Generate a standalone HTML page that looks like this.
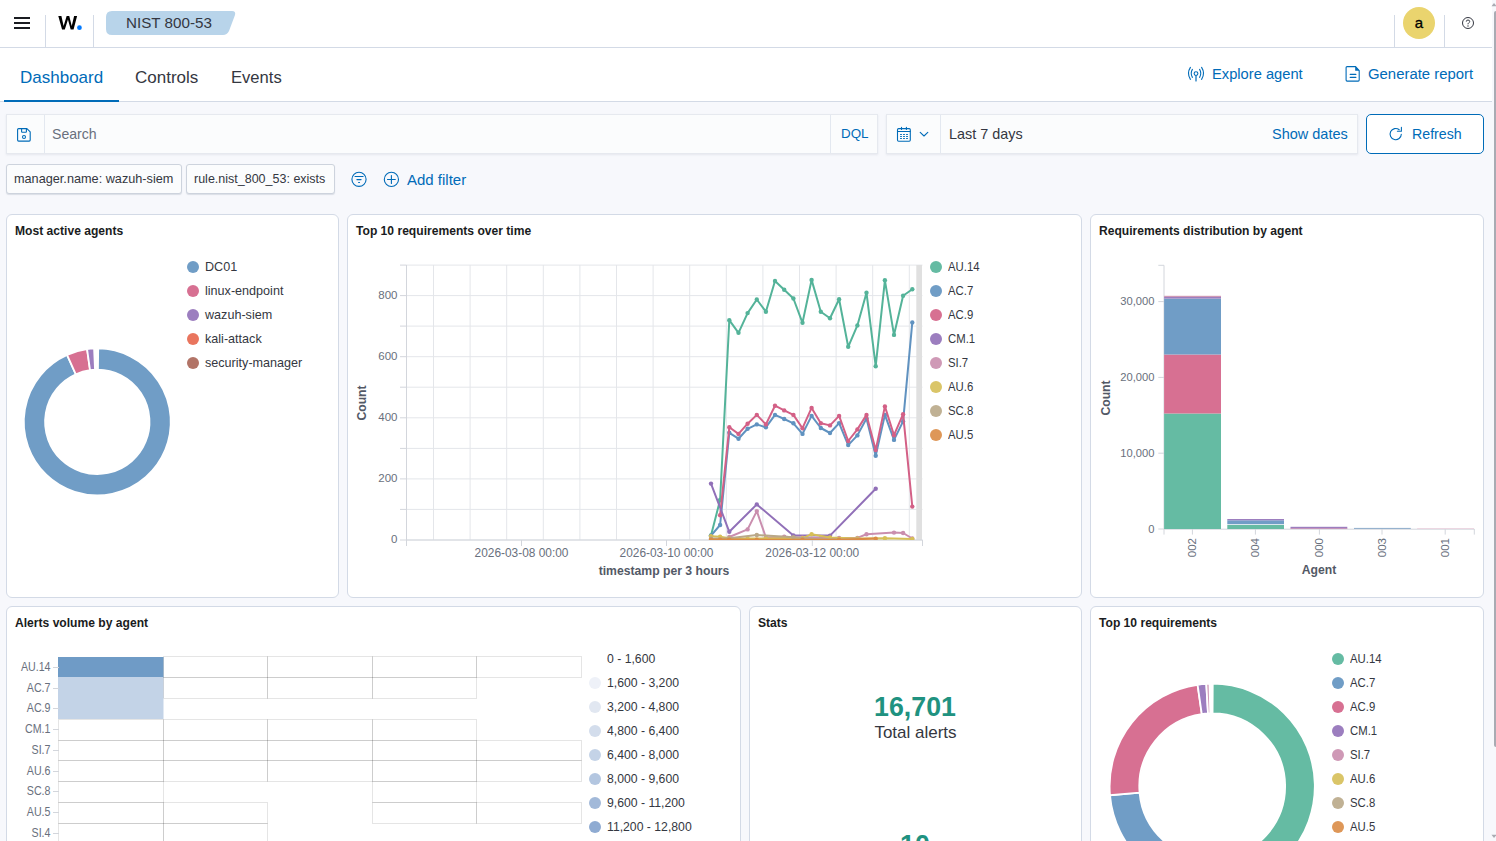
<!DOCTYPE html>
<html><head><meta charset="utf-8">
<style>
*{box-sizing:border-box;margin:0;padding:0}
html,body{width:1496px;height:841px;overflow:hidden;background:#f7f8fc;font-family:"Liberation Sans",sans-serif;color:#343741}
.a{position:absolute;white-space:nowrap}
.hdr{left:0;top:0;width:1492px;height:48px;background:#fff;border-bottom:1px solid #d3dae6}
.tabs{left:0;top:48px;width:1492px;height:54px;background:#fff;border-bottom:1px solid #d3dae6}
.vd{width:1px;background:#d3dae6}
.blue{color:#006bb8}
.box{background:#fbfcfd;border:1px solid #e6e9ef;box-shadow:0 1px 2px rgba(152,162,179,.18)}
.pill{background:#fbfcfd;border:1px solid #cdd3dd;border-radius:3px;box-shadow:0 1px 1px rgba(152,162,179,.3);height:29.5px}
.panel{background:#fff;border:1px solid #d3dae6;border-radius:6px}
.ptitle{font-weight:bold;font-size:12.1px;color:#1a1c21;line-height:14px}
.lg{font-size:12.6px;color:#343741}
.dot{width:11px;height:11px;border-radius:50%}
</style></head><body>
<!-- header -->
<div class="a hdr"></div>
<div class="a" style="left:14px;top:17px;width:16px;height:2px;background:#1a1c21"></div>
<div class="a" style="left:14px;top:22px;width:16px;height:2px;background:#1a1c21"></div>
<div class="a" style="left:14px;top:27px;width:16px;height:2px;background:#1a1c21"></div>
<div class="a vd" style="left:45px;top:15px;height:33px"></div>
<div class="a vd" style="left:93px;top:15px;height:33px"></div>
<svg class="a" style="left:0;top:0" width="100" height="40"><path d="M58.3 16.05H61.4L63.63 26.1L66.64 16.05H69.26L71.74 26.1L74.1 16.05H77.1L73.57 29.53H70.69L67.95 19.6L64.81 29.53H62.06Z" fill="#000"/><circle cx="79.46" cy="27.69" r="2.35" fill="#0079ff"/></svg>

<svg class="a" style="left:106px;top:11px" width="130" height="24"><path d="M6 0H126Q130 0 129 4L123 20Q121 24 117 24H6Q0 24 0 18V6Q0 0 6 0Z" fill="#b8d4ea"/></svg>
<div class="a" style="left:126px;top:14px;font-size:15.2px;color:#343741;line-height:18px">NIST 800-53</div>
<div class="a vd" style="left:1394px;top:15px;height:33px"></div>
<div class="a vd" style="left:1444px;top:15px;height:33px"></div>
<div class="a" style="left:1403px;top:7px;width:32px;height:32px;border-radius:50%;background:#ead46e"></div>
<div class="a" style="left:1403px;top:13.5px;width:32px;text-align:center;font-size:15px;color:#000;line-height:18px;-webkit-text-stroke:0.3px #000">a</div>
<svg class="a" style="left:1461.2px;top:16px" width="14" height="14" viewBox="0 0 14 14"><circle cx="7" cy="7" r="5.5" fill="none" stroke="#343741" stroke-width="1"/><path d="M5.3 5.6Q5.3 4 7 4Q8.7 4 8.7 5.5Q8.7 6.5 7.6 7Q7 7.3 7 8.3" fill="none" stroke="#343741" stroke-width="1"/><circle cx="7" cy="10" r="0.7" fill="#343741"/></svg>

<!-- tabs -->
<div class="a tabs"></div>
<div class="a blue" style="left:20px;top:67.5px;font-size:17px;line-height:20px">Dashboard</div>
<div class="a" style="left:4px;top:100px;width:115px;height:2px;background:#006bb8"></div>
<div class="a" style="left:135px;top:67.5px;font-size:17px;line-height:20px">Controls</div>
<div class="a" style="left:231px;top:67.5px;font-size:16.6px;line-height:20px">Events</div>
<div class="a blue" style="left:1212px;top:64.5px;font-size:14.7px;line-height:18px">Explore agent</div>
<div class="a blue" style="left:1368px;top:64.5px;font-size:14.9px;line-height:18px">Generate report</div>

<!-- search -->
<div class="a box" style="left:6px;top:114px;width:872px;height:40px"></div>
<div class="a vd" style="left:44px;top:115px;height:38px;background:#e3e8f0"></div>
<div class="a vd" style="left:830px;top:115px;height:38px;background:#e3e8f0"></div>
<div class="a" style="left:52px;top:125px;font-size:14.1px;color:#69707d;line-height:18px">Search</div>
<div class="a blue" style="left:841px;top:125px;font-size:13.4px;line-height:18px">DQL</div>
<div class="a box" style="left:886px;top:114px;width:472px;height:40px"></div>
<div class="a vd" style="left:940px;top:115px;height:38px;background:#e3e8f0"></div>
<div class="a" style="left:949px;top:125px;font-size:14.4px;line-height:18px">Last 7 days</div>
<div class="a blue" style="left:1272px;top:125px;font-size:14.5px;line-height:18px">Show dates</div>
<div class="a" style="left:1366px;top:114px;width:118px;height:40px;border:1px solid #006bb8;border-radius:5px;background:#fff"></div>
<div class="a blue" style="left:1412px;top:125px;font-size:14.2px;line-height:18px">Refresh</div>

<!-- filters -->
<div class="a pill" style="left:6px;top:164px;width:176px"></div>
<div class="a" style="left:14px;top:171px;font-size:12.7px;color:#343741;line-height:16px">manager.name: wazuh-siem</div>
<div class="a pill" style="left:186px;top:164px;width:149px"></div>
<div class="a" style="left:194px;top:171px;font-size:12.5px;color:#343741;line-height:16px">rule.nist_800_53: exists</div>
<div class="a blue" style="left:407px;top:171px;font-size:15px;line-height:18px">Add filter</div>

<!-- panels -->
<div class="a panel" style="left:6px;top:214px;width:333px;height:384px"></div>
<div class="a panel" style="left:347px;top:214px;width:735px;height:384px"></div>
<div class="a panel" style="left:1090px;top:214px;width:394px;height:384px"></div>
<div class="a panel" style="left:6px;top:606px;width:735px;height:260px"></div>
<div class="a panel" style="left:749px;top:606px;width:333px;height:260px"></div>
<div class="a panel" style="left:1090px;top:606px;width:394px;height:260px"></div>

<div class="a ptitle" style="left:15px;top:224px">Most active agents</div>
<div class="a ptitle" style="left:356px;top:224px">Top 10 requirements over time</div>
<div class="a ptitle" style="left:1099px;top:224px">Requirements distribution by agent</div>
<div class="a ptitle" style="left:15px;top:616px">Alerts volume by agent</div>
<div class="a ptitle" style="left:758px;top:616px">Stats</div>
<div class="a ptitle" style="left:1099px;top:616px">Top 10 requirements</div>

<!-- icons -->
<svg class="a" style="left:0;top:0" width="1496" height="200" viewBox="0 0 1496 200" fill="none" stroke-linecap="round" stroke-linejoin="round">
<g stroke="#006bb8" stroke-width="1.1">
<path d="M18.6 128.6H26.9L30.2 131.9V140.1Q30.2 141.1 29.2 141.1H18.6Q17.6 141.1 17.6 140.1V129.6Q17.6 128.6 18.6 128.6Z"/>
<path d="M21.6 128.8V131.7Q21.6 132.3 22.2 132.3H25.8Q26.4 132.3 26.4 131.7V128.8"/>
<circle cx="24" cy="137" r="1.5"/>
<path d="M898.6 128.6H909.2Q910.3 128.6 910.3 129.7V140.1Q910.3 141.2 909.2 141.2H898.6Q897.5 141.2 897.5 140.1V129.7Q897.5 128.6 898.6 128.6Z"/>
<path d="M897.6 131.5H910.2M901.5 127.3V129.4M906.4 127.3V129.4"/>
<path d="M920.2 132.4L924 136L927.8 132.4"/>
<path d="M1401.3 134.2A5.6 5.6 0 1 1 1399.2 129.7M1401.4 127.4V131.3H1397.4"/>
<circle cx="359" cy="179.3" r="7.1"/>
<path d="M355 176.5H363.1M356.9 179.6H361.1M358.6 182.5H359.5"/>
<circle cx="391.4" cy="179.4" r="7.1"/>
<path d="M387.5 179.5H395.3M391.4 175.6V183.4"/>
<circle cx="1196" cy="73.6" r="1.9"/>
<path d="M1196 75.8V81" stroke-width="1.2"/>
<path d="M1192.4 69.4Q1190 73.4 1192.4 77.4M1199.6 69.4Q1202 73.4 1199.6 77.4M1190.4 67.4Q1186.5 73.4 1190.4 79.4M1201.6 67.4Q1205.5 73.4 1201.6 79.4"/>
<path d="M1347.1 66.6H1355.6L1359.2 70.6V80.1Q1359.2 81.1 1358.2 81.1H1347.1Q1346.1 81.1 1346.1 80.1V67.6Q1346.1 66.6 1347.1 66.6Z"/>
<path d="M1350.2 74.4H1355.9M1350.2 77.4H1355.9"/>
</g>
<path d="M1355.2 66.4V70.8H1359.4Z" fill="#006bb8"/>
<g fill="#006bb8">
<rect x="900" y="133.9" width="2" height="1.1" rx="0.5"/><rect x="903" y="133.9" width="2" height="1.1" rx="0.5"/><rect x="906" y="133.9" width="2" height="1.1" rx="0.5"/>
<rect x="900" y="135.9" width="2" height="1.1" rx="0.5"/><rect x="903" y="135.9" width="2" height="1.1" rx="0.5"/><rect x="906" y="135.9" width="2" height="1.1" rx="0.5"/>
<rect x="900" y="137.9" width="2" height="1.1" rx="0.5"/><rect x="903" y="137.9" width="2" height="1.1" rx="0.5"/><rect x="906" y="137.9" width="2" height="1.1" rx="0.5"/>
</g>
</svg>
<svg class="a" style="left:0;top:0" width="1496" height="841" viewBox="0 0 1496 841"><line x1="433.5" y1="265.0" x2="433.5" y2="540.0" stroke="#e4e6ea" stroke-width="1"/><line x1="470.1" y1="265.0" x2="470.1" y2="540.0" stroke="#e4e6ea" stroke-width="1"/><line x1="506.7" y1="265.0" x2="506.7" y2="540.0" stroke="#e4e6ea" stroke-width="1"/><line x1="543.3" y1="265.0" x2="543.3" y2="540.0" stroke="#e4e6ea" stroke-width="1"/><line x1="579.9" y1="265.0" x2="579.9" y2="540.0" stroke="#e4e6ea" stroke-width="1"/><line x1="616.5" y1="265.0" x2="616.5" y2="540.0" stroke="#e4e6ea" stroke-width="1"/><line x1="653.1" y1="265.0" x2="653.1" y2="540.0" stroke="#e4e6ea" stroke-width="1"/><line x1="689.7" y1="265.0" x2="689.7" y2="540.0" stroke="#e4e6ea" stroke-width="1"/><line x1="726.3" y1="265.0" x2="726.3" y2="540.0" stroke="#e4e6ea" stroke-width="1"/><line x1="762.9" y1="265.0" x2="762.9" y2="540.0" stroke="#e4e6ea" stroke-width="1"/><line x1="799.5" y1="265.0" x2="799.5" y2="540.0" stroke="#e4e6ea" stroke-width="1"/><line x1="836.1" y1="265.0" x2="836.1" y2="540.0" stroke="#e4e6ea" stroke-width="1"/><line x1="872.7" y1="265.0" x2="872.7" y2="540.0" stroke="#e4e6ea" stroke-width="1"/><line x1="909.3" y1="265.0" x2="909.3" y2="540.0" stroke="#e4e6ea" stroke-width="1"/><line x1="406.5" y1="540.0" x2="922.5" y2="540.0" stroke="#e4e6ea" stroke-width="1"/><line x1="406.5" y1="509.4" x2="922.5" y2="509.4" stroke="#e4e6ea" stroke-width="1"/><line x1="406.5" y1="478.9" x2="922.5" y2="478.9" stroke="#e4e6ea" stroke-width="1"/><line x1="406.5" y1="448.4" x2="922.5" y2="448.4" stroke="#e4e6ea" stroke-width="1"/><line x1="406.5" y1="417.8" x2="922.5" y2="417.8" stroke="#e4e6ea" stroke-width="1"/><line x1="406.5" y1="387.2" x2="922.5" y2="387.2" stroke="#e4e6ea" stroke-width="1"/><line x1="406.5" y1="356.7" x2="922.5" y2="356.7" stroke="#e4e6ea" stroke-width="1"/><line x1="406.5" y1="326.1" x2="922.5" y2="326.1" stroke="#e4e6ea" stroke-width="1"/><line x1="406.5" y1="295.6" x2="922.5" y2="295.6" stroke="#e4e6ea" stroke-width="1"/><line x1="406.5" y1="265.1" x2="922.5" y2="265.1" stroke="#e4e6ea" stroke-width="1"/><rect x="916.3" y="265.0" width="5.7" height="275.0" fill="#e0e0e0"/><line x1="406.5" y1="265.0" x2="406.5" y2="540.0" stroke="#d3d6dc" stroke-width="1"/><line x1="406.5" y1="540.0" x2="922.5" y2="540.0" stroke="#d3d6dc" stroke-width="1"/><line x1="400" y1="540.0" x2="406.5" y2="540.0" stroke="#d3d6dc" stroke-width="1"/><line x1="400" y1="509.4" x2="406.5" y2="509.4" stroke="#d3d6dc" stroke-width="1"/><line x1="400" y1="478.9" x2="406.5" y2="478.9" stroke="#d3d6dc" stroke-width="1"/><line x1="400" y1="448.4" x2="406.5" y2="448.4" stroke="#d3d6dc" stroke-width="1"/><line x1="400" y1="417.8" x2="406.5" y2="417.8" stroke="#d3d6dc" stroke-width="1"/><line x1="400" y1="387.2" x2="406.5" y2="387.2" stroke="#d3d6dc" stroke-width="1"/><line x1="400" y1="356.7" x2="406.5" y2="356.7" stroke="#d3d6dc" stroke-width="1"/><line x1="400" y1="326.1" x2="406.5" y2="326.1" stroke="#d3d6dc" stroke-width="1"/><line x1="400" y1="295.6" x2="406.5" y2="295.6" stroke="#d3d6dc" stroke-width="1"/><line x1="400" y1="265.1" x2="406.5" y2="265.1" stroke="#d3d6dc" stroke-width="1"/><line x1="406.5" y1="540.0" x2="406.5" y2="546" stroke="#d3d6dc" stroke-width="1"/><line x1="521.5" y1="540.0" x2="521.5" y2="546" stroke="#d3d6dc" stroke-width="1"/><line x1="666.5" y1="540.0" x2="666.5" y2="546" stroke="#d3d6dc" stroke-width="1"/><line x1="812.3" y1="540.0" x2="812.3" y2="546" stroke="#d3d6dc" stroke-width="1"/><line x1="922.5" y1="540.0" x2="922.5" y2="546" stroke="#d3d6dc" stroke-width="1"/><clipPath id="cp2"><rect x="400" y="255" width="530" height="285"/></clipPath><g clip-path="url(#cp2)"><polyline points="711.0,535.5 720.1,500.0 729.3,320.2 738.5,332.8 747.6,313.1 756.8,299.5 765.9,311.7 775.0,281.0 784.2,289.7 793.4,298.5 802.5,322.8 811.6,279.9 820.8,311.7 830.0,318.2 839.1,299.2 848.2,346.8 857.4,325.4 866.5,292.8 875.7,366.2 884.9,280.3 894.0,334.9 903.1,295.7 912.3,289.3" fill="none" stroke="#54B399" stroke-width="2.0" stroke-linejoin="round"/><circle cx="711.0" cy="535.5" r="2.2" fill="#54B399"/><circle cx="720.1" cy="500.0" r="2.2" fill="#54B399"/><circle cx="729.3" cy="320.2" r="2.2" fill="#54B399"/><circle cx="738.5" cy="332.8" r="2.2" fill="#54B399"/><circle cx="747.6" cy="313.1" r="2.2" fill="#54B399"/><circle cx="756.8" cy="299.5" r="2.2" fill="#54B399"/><circle cx="765.9" cy="311.7" r="2.2" fill="#54B399"/><circle cx="775.0" cy="281.0" r="2.2" fill="#54B399"/><circle cx="784.2" cy="289.7" r="2.2" fill="#54B399"/><circle cx="793.4" cy="298.5" r="2.2" fill="#54B399"/><circle cx="802.5" cy="322.8" r="2.2" fill="#54B399"/><circle cx="811.6" cy="279.9" r="2.2" fill="#54B399"/><circle cx="820.8" cy="311.7" r="2.2" fill="#54B399"/><circle cx="830.0" cy="318.2" r="2.2" fill="#54B399"/><circle cx="839.1" cy="299.2" r="2.2" fill="#54B399"/><circle cx="848.2" cy="346.8" r="2.2" fill="#54B399"/><circle cx="857.4" cy="325.4" r="2.2" fill="#54B399"/><circle cx="866.5" cy="292.8" r="2.2" fill="#54B399"/><circle cx="875.7" cy="366.2" r="2.2" fill="#54B399"/><circle cx="884.9" cy="280.3" r="2.2" fill="#54B399"/><circle cx="894.0" cy="334.9" r="2.2" fill="#54B399"/><circle cx="903.1" cy="295.7" r="2.2" fill="#54B399"/><circle cx="912.3" cy="289.3" r="2.2" fill="#54B399"/><polyline points="711.0,535.6 720.1,525.0 729.3,432.8 738.5,438.7 747.6,428.8 756.8,424.4 765.9,427.3 775.0,414.9 784.2,419.0 793.4,423.3 802.5,433.9 811.6,415.9 820.8,428.0 830.0,433.0 839.1,423.1 848.2,445.1 857.4,435.4 866.5,418.5 875.7,455.8 884.9,414.9 894.0,439.9 903.1,421.4 912.3,322.4" fill="none" stroke="#6092C0" stroke-width="2.0" stroke-linejoin="round"/><circle cx="711.0" cy="535.6" r="2.2" fill="#6092C0"/><circle cx="720.1" cy="525.0" r="2.2" fill="#6092C0"/><circle cx="729.3" cy="432.8" r="2.2" fill="#6092C0"/><circle cx="738.5" cy="438.7" r="2.2" fill="#6092C0"/><circle cx="747.6" cy="428.8" r="2.2" fill="#6092C0"/><circle cx="756.8" cy="424.4" r="2.2" fill="#6092C0"/><circle cx="765.9" cy="427.3" r="2.2" fill="#6092C0"/><circle cx="775.0" cy="414.9" r="2.2" fill="#6092C0"/><circle cx="784.2" cy="419.0" r="2.2" fill="#6092C0"/><circle cx="793.4" cy="423.3" r="2.2" fill="#6092C0"/><circle cx="802.5" cy="433.9" r="2.2" fill="#6092C0"/><circle cx="811.6" cy="415.9" r="2.2" fill="#6092C0"/><circle cx="820.8" cy="428.0" r="2.2" fill="#6092C0"/><circle cx="830.0" cy="433.0" r="2.2" fill="#6092C0"/><circle cx="839.1" cy="423.1" r="2.2" fill="#6092C0"/><circle cx="848.2" cy="445.1" r="2.2" fill="#6092C0"/><circle cx="857.4" cy="435.4" r="2.2" fill="#6092C0"/><circle cx="866.5" cy="418.5" r="2.2" fill="#6092C0"/><circle cx="875.7" cy="455.8" r="2.2" fill="#6092C0"/><circle cx="884.9" cy="414.9" r="2.2" fill="#6092C0"/><circle cx="894.0" cy="439.9" r="2.2" fill="#6092C0"/><circle cx="903.1" cy="421.4" r="2.2" fill="#6092C0"/><circle cx="912.3" cy="322.4" r="2.2" fill="#6092C0"/><polyline points="720.1,515.2 729.3,427.3 738.5,433.9 747.6,423.7 756.8,414.9 765.9,424.4 775.0,405.7 784.2,410.4 793.4,414.9 802.5,428.2 811.6,407.9 820.8,423.3 830.0,425.4 839.1,415.9 848.2,441.0 857.4,429.4 866.5,414.9 875.7,450.1 884.9,406.4 894.0,435.2 903.1,414.2 912.3,506.6" fill="none" stroke="#D36086" stroke-width="2.0" stroke-linejoin="round"/><circle cx="720.1" cy="515.2" r="2.2" fill="#D36086"/><circle cx="729.3" cy="427.3" r="2.2" fill="#D36086"/><circle cx="738.5" cy="433.9" r="2.2" fill="#D36086"/><circle cx="747.6" cy="423.7" r="2.2" fill="#D36086"/><circle cx="756.8" cy="414.9" r="2.2" fill="#D36086"/><circle cx="765.9" cy="424.4" r="2.2" fill="#D36086"/><circle cx="775.0" cy="405.7" r="2.2" fill="#D36086"/><circle cx="784.2" cy="410.4" r="2.2" fill="#D36086"/><circle cx="793.4" cy="414.9" r="2.2" fill="#D36086"/><circle cx="802.5" cy="428.2" r="2.2" fill="#D36086"/><circle cx="811.6" cy="407.9" r="2.2" fill="#D36086"/><circle cx="820.8" cy="423.3" r="2.2" fill="#D36086"/><circle cx="830.0" cy="425.4" r="2.2" fill="#D36086"/><circle cx="839.1" cy="415.9" r="2.2" fill="#D36086"/><circle cx="848.2" cy="441.0" r="2.2" fill="#D36086"/><circle cx="857.4" cy="429.4" r="2.2" fill="#D36086"/><circle cx="866.5" cy="414.9" r="2.2" fill="#D36086"/><circle cx="875.7" cy="450.1" r="2.2" fill="#D36086"/><circle cx="884.9" cy="406.4" r="2.2" fill="#D36086"/><circle cx="894.0" cy="435.2" r="2.2" fill="#D36086"/><circle cx="903.1" cy="414.2" r="2.2" fill="#D36086"/><circle cx="912.3" cy="506.6" r="2.2" fill="#D36086"/><polyline points="711.0,483.6 729.3,531.8 756.8,504.4 793.4,535.4 830.0,535.6 875.7,488.8" fill="none" stroke="#9170B8" stroke-width="2.0" stroke-linejoin="round"/><circle cx="711.0" cy="483.6" r="2.2" fill="#9170B8"/><circle cx="729.3" cy="531.8" r="2.2" fill="#9170B8"/><circle cx="756.8" cy="504.4" r="2.2" fill="#9170B8"/><circle cx="793.4" cy="535.4" r="2.2" fill="#9170B8"/><circle cx="830.0" cy="535.6" r="2.2" fill="#9170B8"/><circle cx="875.7" cy="488.8" r="2.2" fill="#9170B8"/><polyline points="729.3,537.0 747.6,529.4 756.8,511.1 765.9,537.5 784.2,536.7 802.5,537.8 820.8,538.0 839.1,538.0 857.4,537.9 866.5,534.2 894.0,532.6 903.1,533.0 912.3,538.5" fill="none" stroke="#CA8EAE" stroke-width="2.0" stroke-linejoin="round"/><circle cx="729.3" cy="537.0" r="2.2" fill="#CA8EAE"/><circle cx="747.6" cy="529.4" r="2.2" fill="#CA8EAE"/><circle cx="756.8" cy="511.1" r="2.2" fill="#CA8EAE"/><circle cx="765.9" cy="537.5" r="2.2" fill="#CA8EAE"/><circle cx="784.2" cy="536.7" r="2.2" fill="#CA8EAE"/><circle cx="802.5" cy="537.8" r="2.2" fill="#CA8EAE"/><circle cx="820.8" cy="538.0" r="2.2" fill="#CA8EAE"/><circle cx="839.1" cy="538.0" r="2.2" fill="#CA8EAE"/><circle cx="857.4" cy="537.9" r="2.2" fill="#CA8EAE"/><circle cx="866.5" cy="534.2" r="2.2" fill="#CA8EAE"/><circle cx="894.0" cy="532.6" r="2.2" fill="#CA8EAE"/><circle cx="903.1" cy="533.0" r="2.2" fill="#CA8EAE"/><circle cx="912.3" cy="538.5" r="2.2" fill="#CA8EAE"/><polyline points="711.0,536.3 720.1,536.8 729.3,538.3 747.6,538.5 765.9,538.5 784.2,538.3 802.5,538.3 811.6,534.2 830.0,537.5 857.4,538.5 884.9,538.3 912.3,539.0" fill="none" stroke="#D6BF57" stroke-width="2.0" stroke-linejoin="round"/><circle cx="711.0" cy="536.3" r="2.2" fill="#D6BF57"/><circle cx="720.1" cy="536.8" r="2.2" fill="#D6BF57"/><circle cx="729.3" cy="538.3" r="2.2" fill="#D6BF57"/><circle cx="747.6" cy="538.5" r="2.2" fill="#D6BF57"/><circle cx="765.9" cy="538.5" r="2.2" fill="#D6BF57"/><circle cx="784.2" cy="538.3" r="2.2" fill="#D6BF57"/><circle cx="802.5" cy="538.3" r="2.2" fill="#D6BF57"/><circle cx="811.6" cy="534.2" r="2.2" fill="#D6BF57"/><circle cx="830.0" cy="537.5" r="2.2" fill="#D6BF57"/><circle cx="857.4" cy="538.5" r="2.2" fill="#D6BF57"/><circle cx="884.9" cy="538.3" r="2.2" fill="#D6BF57"/><circle cx="912.3" cy="539.0" r="2.2" fill="#D6BF57"/><polyline points="711.0,538.5 729.3,538.3 756.8,535.0 793.4,537.3 820.8,539.5 857.4,539.5" fill="none" stroke="#B9A888" stroke-width="2.0" stroke-linejoin="round"/><circle cx="711.0" cy="538.5" r="2.2" fill="#B9A888"/><circle cx="729.3" cy="538.3" r="2.2" fill="#B9A888"/><circle cx="756.8" cy="535.0" r="2.2" fill="#B9A888"/><circle cx="793.4" cy="537.3" r="2.2" fill="#B9A888"/><circle cx="820.8" cy="539.5" r="2.2" fill="#B9A888"/><circle cx="857.4" cy="539.5" r="2.2" fill="#B9A888"/><polyline points="711.0,539.6 720.1,539.6 729.3,539.6 756.8,539.8 802.5,539.8 839.1,539.8 875.7,538.6" fill="none" stroke="#DA8B45" stroke-width="2.0" stroke-linejoin="round"/><circle cx="711.0" cy="539.6" r="2.2" fill="#DA8B45"/><circle cx="720.1" cy="539.6" r="2.2" fill="#DA8B45"/><circle cx="729.3" cy="539.6" r="2.2" fill="#DA8B45"/><circle cx="756.8" cy="539.8" r="2.2" fill="#DA8B45"/><circle cx="802.5" cy="539.8" r="2.2" fill="#DA8B45"/><circle cx="839.1" cy="539.8" r="2.2" fill="#DA8B45"/><circle cx="875.7" cy="538.6" r="2.2" fill="#DA8B45"/></g><path d="M98.20 348.41A73.5 73.5 0 1 1 67.05 354.91L75.82 374.32A52.2 52.2 0 1 0 97.94 369.70Z" fill="#709dc6" stroke="#fff" stroke-width="1.8"/><path d="M67.05 354.91A73.5 73.5 0 0 1 87.07 349.12L90.04 370.21A52.2 52.2 0 0 0 75.82 374.32Z" fill="#d77092" stroke="#fff" stroke-width="1.8"/><path d="M87.07 349.12A73.5 73.5 0 0 1 94.09 348.47L95.02 369.75A52.2 52.2 0 0 0 90.04 370.21Z" fill="#9c7ebf" stroke="#fff" stroke-width="1.8"/><path d="M1212.74 683.70A102.6 102.6 0 0 1 1217.57 888.76L1216.02 859.10A72.9 72.9 0 0 0 1212.58 713.40Z" fill="#65bba3" stroke="#fff" stroke-width="1.8"/><path d="M1217.57 888.76A102.6 102.6 0 0 1 1109.99 795.24L1139.58 792.65A72.9 72.9 0 0 0 1216.02 859.10Z" fill="#709dc6" stroke="#fff" stroke-width="1.8"/><path d="M1109.99 795.24A102.6 102.6 0 0 1 1197.57 684.75L1201.80 714.15A72.9 72.9 0 0 0 1139.58 792.65Z" fill="#d77092" stroke="#fff" stroke-width="1.8"/><path d="M1197.57 684.75A102.6 102.6 0 0 1 1206.29 683.87L1208.00 713.52A72.9 72.9 0 0 0 1201.80 714.15Z" fill="#9c7ebf" stroke="#fff" stroke-width="1.8"/><path d="M1206.29 683.87A102.6 102.6 0 0 1 1209.51 683.74L1210.29 713.42A72.9 72.9 0 0 0 1208.00 713.52Z" fill="#cf99b6" stroke="#fff" stroke-width="1.8"/><line x1="1164" y1="265.3" x2="1164" y2="529.0" stroke="#d3d6dc"/><line x1="1164" y1="529.2" x2="1474.3" y2="529.2" stroke="#d3d6dc"/><line x1="1158.3" y1="529.0" x2="1164" y2="529.0" stroke="#d3d6dc"/><line x1="1158.3" y1="453.2" x2="1164" y2="453.2" stroke="#d3d6dc"/><line x1="1158.3" y1="377.4" x2="1164" y2="377.4" stroke="#d3d6dc"/><line x1="1158.3" y1="301.6" x2="1164" y2="301.6" stroke="#d3d6dc"/><line x1="1158.3" y1="265.3" x2="1164" y2="265.3" stroke="#d3d6dc"/><line x1="1164" y1="529.0" x2="1164" y2="534.6" stroke="#d3d6dc"/><line x1="1192.4" y1="529.0" x2="1192.4" y2="534.6" stroke="#d3d6dc"/><line x1="1255.4" y1="529.0" x2="1255.4" y2="534.6" stroke="#d3d6dc"/><line x1="1319.4" y1="529.0" x2="1319.4" y2="534.6" stroke="#d3d6dc"/><line x1="1382" y1="529.0" x2="1382" y2="534.6" stroke="#d3d6dc"/><line x1="1445.2" y1="529.0" x2="1445.2" y2="534.6" stroke="#d3d6dc"/><line x1="1474.3" y1="529.0" x2="1474.3" y2="534.6" stroke="#d3d6dc"/><rect x="1164.1" y="413.5" width="56.9" height="115.5" fill="#65bba3"/><rect x="1164.1" y="354.5" width="56.9" height="59.0" fill="#d77092"/><rect x="1164.1" y="298.6" width="56.9" height="55.9" fill="#709dc6"/><rect x="1164.1" y="297.0" width="56.9" height="1.6" fill="#9c7ebf"/><rect x="1164.1" y="295.8" width="56.9" height="1.2" fill="#cf99b6"/><rect x="1227.3" y="524.8" width="56.7" height="4.2" fill="#65bba3"/><rect x="1227.3" y="524.2" width="56.7" height="0.6" fill="#fff"/><rect x="1227.3" y="520.3" width="56.7" height="3.9" fill="#709dc6"/><rect x="1227.3" y="519.0" width="56.7" height="1.3" fill="#9c7ebf"/><rect x="1290.5" y="528.4" width="56.8" height="0.6" fill="#d77092"/><rect x="1290.5" y="526.8" width="56.8" height="1.6" fill="#9c7ebf"/><rect x="1354.0" y="527.9" width="56.8" height="1.1" fill="#96b2ce"/><rect x="1417.1" y="528.0" width="56.9" height="1.0" fill="#ecd7e2"/><rect x="58.0" y="657.0" width="105.5" height="21.0" fill="#6f9bc6"/><rect x="163.5" y="656.5" width="104.0" height="21.0" fill="none" stroke="rgba(0,0,0,0.1)" stroke-width="1"/><rect x="267.5" y="656.5" width="105.0" height="21.0" fill="none" stroke="rgba(0,0,0,0.1)" stroke-width="1"/><rect x="372.5" y="656.5" width="104.0" height="21.0" fill="none" stroke="rgba(0,0,0,0.1)" stroke-width="1"/><rect x="476.5" y="656.5" width="105.0" height="21.0" fill="none" stroke="rgba(0,0,0,0.1)" stroke-width="1"/><rect x="58.0" y="677.0" width="105.5" height="21.0" fill="#c3d3e7"/><rect x="163.5" y="677.5" width="104.0" height="21.0" fill="none" stroke="rgba(0,0,0,0.1)" stroke-width="1"/><rect x="267.5" y="677.5" width="105.0" height="21.0" fill="none" stroke="rgba(0,0,0,0.1)" stroke-width="1"/><rect x="372.5" y="677.5" width="104.0" height="21.0" fill="none" stroke="rgba(0,0,0,0.1)" stroke-width="1"/><rect x="58.0" y="698.0" width="105.5" height="21.0" fill="#c3d3e7"/><rect x="58.5" y="719.5" width="105.0" height="21.0" fill="none" stroke="rgba(0,0,0,0.1)" stroke-width="1"/><rect x="163.5" y="719.5" width="104.0" height="21.0" fill="none" stroke="rgba(0,0,0,0.1)" stroke-width="1"/><rect x="267.5" y="719.5" width="105.0" height="21.0" fill="none" stroke="rgba(0,0,0,0.1)" stroke-width="1"/><rect x="372.5" y="719.5" width="104.0" height="21.0" fill="none" stroke="rgba(0,0,0,0.1)" stroke-width="1"/><rect x="58.5" y="740.5" width="105.0" height="20.0" fill="none" stroke="rgba(0,0,0,0.1)" stroke-width="1"/><rect x="163.5" y="740.5" width="104.0" height="20.0" fill="none" stroke="rgba(0,0,0,0.1)" stroke-width="1"/><rect x="267.5" y="740.5" width="105.0" height="20.0" fill="none" stroke="rgba(0,0,0,0.1)" stroke-width="1"/><rect x="372.5" y="740.5" width="104.0" height="20.0" fill="none" stroke="rgba(0,0,0,0.1)" stroke-width="1"/><rect x="476.5" y="740.5" width="105.0" height="20.0" fill="none" stroke="rgba(0,0,0,0.1)" stroke-width="1"/><rect x="58.5" y="760.5" width="105.0" height="21.0" fill="none" stroke="rgba(0,0,0,0.1)" stroke-width="1"/><rect x="163.5" y="760.5" width="104.0" height="21.0" fill="none" stroke="rgba(0,0,0,0.1)" stroke-width="1"/><rect x="267.5" y="760.5" width="105.0" height="21.0" fill="none" stroke="rgba(0,0,0,0.1)" stroke-width="1"/><rect x="372.5" y="760.5" width="104.0" height="21.0" fill="none" stroke="rgba(0,0,0,0.1)" stroke-width="1"/><rect x="476.5" y="760.5" width="105.0" height="21.0" fill="none" stroke="rgba(0,0,0,0.1)" stroke-width="1"/><rect x="58.5" y="781.5" width="105.0" height="21.0" fill="none" stroke="rgba(0,0,0,0.1)" stroke-width="1"/><rect x="372.5" y="781.5" width="104.0" height="21.0" fill="none" stroke="rgba(0,0,0,0.1)" stroke-width="1"/><rect x="58.5" y="802.5" width="105.0" height="21.0" fill="none" stroke="rgba(0,0,0,0.1)" stroke-width="1"/><rect x="163.5" y="802.5" width="104.0" height="21.0" fill="none" stroke="rgba(0,0,0,0.1)" stroke-width="1"/><rect x="372.5" y="802.5" width="104.0" height="21.0" fill="none" stroke="rgba(0,0,0,0.1)" stroke-width="1"/><rect x="476.5" y="802.5" width="105.0" height="21.0" fill="none" stroke="rgba(0,0,0,0.1)" stroke-width="1"/><rect x="58.5" y="823.5" width="105.0" height="21.0" fill="none" stroke="rgba(0,0,0,0.1)" stroke-width="1"/><rect x="163.5" y="823.5" width="104.0" height="21.0" fill="none" stroke="rgba(0,0,0,0.1)" stroke-width="1"/></svg>
<div class="a" style="left:186.9px;top:261.0px;width:12.0px;height:12.0px;border-radius:50%;background:#709dc6"></div>
<div class="a" style="left:205px;top:259.6px;font-size:12.6px;color:#343741;font-weight:normal;line-height:14px;">DC01</div>
<div class="a" style="left:186.9px;top:285.0px;width:12.0px;height:12.0px;border-radius:50%;background:#d77092"></div>
<div class="a" style="left:205px;top:283.6px;font-size:12.6px;color:#343741;font-weight:normal;line-height:14px;">linux-endpoint</div>
<div class="a" style="left:186.9px;top:309.0px;width:12.0px;height:12.0px;border-radius:50%;background:#9c7ebf"></div>
<div class="a" style="left:205px;top:307.6px;font-size:12.6px;color:#343741;font-weight:normal;line-height:14px;">wazuh-siem</div>
<div class="a" style="left:186.9px;top:333.0px;width:12.0px;height:12.0px;border-radius:50%;background:#e9755e"></div>
<div class="a" style="left:205px;top:331.6px;font-size:12.6px;color:#343741;font-weight:normal;line-height:14px;">kali-attack</div>
<div class="a" style="left:186.9px;top:357.0px;width:12.0px;height:12.0px;border-radius:50%;background:#b27467"></div>
<div class="a" style="left:205px;top:355.6px;font-size:12.6px;color:#343741;font-weight:normal;line-height:14px;">security-manager</div>
<div class="a" style="left:930.1px;top:260.8px;width:12.0px;height:12.0px;border-radius:50%;background:#65bba3"></div>
<div class="a" style="left:948px;top:259.5px;font-size:12.6px;color:#343741;font-weight:normal;line-height:14px;transform:scaleX(0.9);transform-origin:0 0">AU.14</div>
<div class="a" style="left:930.1px;top:284.8px;width:12.0px;height:12.0px;border-radius:50%;background:#709dc6"></div>
<div class="a" style="left:948px;top:283.5px;font-size:12.6px;color:#343741;font-weight:normal;line-height:14px;transform:scaleX(0.9);transform-origin:0 0">AC.7</div>
<div class="a" style="left:930.1px;top:308.8px;width:12.0px;height:12.0px;border-radius:50%;background:#d77092"></div>
<div class="a" style="left:948px;top:307.5px;font-size:12.6px;color:#343741;font-weight:normal;line-height:14px;transform:scaleX(0.9);transform-origin:0 0">AC.9</div>
<div class="a" style="left:930.1px;top:332.8px;width:12.0px;height:12.0px;border-radius:50%;background:#9c7ebf"></div>
<div class="a" style="left:948px;top:331.5px;font-size:12.6px;color:#343741;font-weight:normal;line-height:14px;transform:scaleX(0.9);transform-origin:0 0">CM.1</div>
<div class="a" style="left:930.1px;top:356.8px;width:12.0px;height:12.0px;border-radius:50%;background:#cf99b6"></div>
<div class="a" style="left:948px;top:355.5px;font-size:12.6px;color:#343741;font-weight:normal;line-height:14px;transform:scaleX(0.9);transform-origin:0 0">SI.7</div>
<div class="a" style="left:930.1px;top:380.8px;width:12.0px;height:12.0px;border-radius:50%;background:#dac568"></div>
<div class="a" style="left:948px;top:379.5px;font-size:12.6px;color:#343741;font-weight:normal;line-height:14px;transform:scaleX(0.9);transform-origin:0 0">AU.6</div>
<div class="a" style="left:930.1px;top:404.8px;width:12.0px;height:12.0px;border-radius:50%;background:#c0b194"></div>
<div class="a" style="left:948px;top:403.5px;font-size:12.6px;color:#343741;font-weight:normal;line-height:14px;transform:scaleX(0.9);transform-origin:0 0">SC.8</div>
<div class="a" style="left:930.1px;top:428.8px;width:12.0px;height:12.0px;border-radius:50%;background:#de9758"></div>
<div class="a" style="left:948px;top:427.5px;font-size:12.6px;color:#343741;font-weight:normal;line-height:14px;transform:scaleX(0.9);transform-origin:0 0">AU.5</div>
<div class="a" style="left:1331.8px;top:653.1px;width:12.0px;height:12.0px;border-radius:50%;background:#65bba3"></div>
<div class="a" style="left:1350px;top:651.8px;font-size:12.6px;color:#343741;font-weight:normal;line-height:14px;transform:scaleX(0.9);transform-origin:0 0">AU.14</div>
<div class="a" style="left:1331.8px;top:677.1px;width:12.0px;height:12.0px;border-radius:50%;background:#709dc6"></div>
<div class="a" style="left:1350px;top:675.8px;font-size:12.6px;color:#343741;font-weight:normal;line-height:14px;transform:scaleX(0.9);transform-origin:0 0">AC.7</div>
<div class="a" style="left:1331.8px;top:701.1px;width:12.0px;height:12.0px;border-radius:50%;background:#d77092"></div>
<div class="a" style="left:1350px;top:699.8px;font-size:12.6px;color:#343741;font-weight:normal;line-height:14px;transform:scaleX(0.9);transform-origin:0 0">AC.9</div>
<div class="a" style="left:1331.8px;top:725.1px;width:12.0px;height:12.0px;border-radius:50%;background:#9c7ebf"></div>
<div class="a" style="left:1350px;top:723.8px;font-size:12.6px;color:#343741;font-weight:normal;line-height:14px;transform:scaleX(0.9);transform-origin:0 0">CM.1</div>
<div class="a" style="left:1331.8px;top:749.1px;width:12.0px;height:12.0px;border-radius:50%;background:#cf99b6"></div>
<div class="a" style="left:1350px;top:747.8px;font-size:12.6px;color:#343741;font-weight:normal;line-height:14px;transform:scaleX(0.9);transform-origin:0 0">SI.7</div>
<div class="a" style="left:1331.8px;top:773.1px;width:12.0px;height:12.0px;border-radius:50%;background:#dac568"></div>
<div class="a" style="left:1350px;top:771.8px;font-size:12.6px;color:#343741;font-weight:normal;line-height:14px;transform:scaleX(0.9);transform-origin:0 0">AU.6</div>
<div class="a" style="left:1331.8px;top:797.1px;width:12.0px;height:12.0px;border-radius:50%;background:#c0b194"></div>
<div class="a" style="left:1350px;top:795.8px;font-size:12.6px;color:#343741;font-weight:normal;line-height:14px;transform:scaleX(0.9);transform-origin:0 0">SC.8</div>
<div class="a" style="left:1331.8px;top:821.1px;width:12.0px;height:12.0px;border-radius:50%;background:#de9758"></div>
<div class="a" style="left:1350px;top:819.8px;font-size:12.6px;color:#343741;font-weight:normal;line-height:14px;transform:scaleX(0.9);transform-origin:0 0">AU.5</div>
<div class="a" style="left:607px;top:651.7px;font-size:12.6px;color:#343741;font-weight:normal;line-height:14px;transform:scaleX(0.97);transform-origin:0 0">0 - 1,600</div>
<div class="a" style="left:589.0px;top:676.7px;width:12.0px;height:12.0px;border-radius:50%;background:#eef1f8"></div>
<div class="a" style="left:607px;top:675.7px;font-size:12.6px;color:#343741;font-weight:normal;line-height:14px;transform:scaleX(0.97);transform-origin:0 0">1,600 - 3,200</div>
<div class="a" style="left:589.0px;top:700.7px;width:12.0px;height:12.0px;border-radius:50%;background:#e1e7f1"></div>
<div class="a" style="left:607px;top:699.7px;font-size:12.6px;color:#343741;font-weight:normal;line-height:14px;transform:scaleX(0.97);transform-origin:0 0">3,200 - 4,800</div>
<div class="a" style="left:589.0px;top:724.7px;width:12.0px;height:12.0px;border-radius:50%;background:#d3ddec"></div>
<div class="a" style="left:607px;top:723.7px;font-size:12.6px;color:#343741;font-weight:normal;line-height:14px;transform:scaleX(0.97);transform-origin:0 0">4,800 - 6,400</div>
<div class="a" style="left:589.0px;top:748.7px;width:12.0px;height:12.0px;border-radius:50%;background:#c4d3e7"></div>
<div class="a" style="left:607px;top:747.7px;font-size:12.6px;color:#343741;font-weight:normal;line-height:14px;transform:scaleX(0.97);transform-origin:0 0">6,400 - 8,000</div>
<div class="a" style="left:589.0px;top:772.7px;width:12.0px;height:12.0px;border-radius:50%;background:#b3c6e0"></div>
<div class="a" style="left:607px;top:771.7px;font-size:12.6px;color:#343741;font-weight:normal;line-height:14px;transform:scaleX(0.97);transform-origin:0 0">8,000 - 9,600</div>
<div class="a" style="left:589.0px;top:796.7px;width:12.0px;height:12.0px;border-radius:50%;background:#a2b9d9"></div>
<div class="a" style="left:607px;top:795.7px;font-size:12.6px;color:#343741;font-weight:normal;line-height:14px;transform:scaleX(0.97);transform-origin:0 0">9,600 - 11,200</div>
<div class="a" style="left:589.0px;top:820.7px;width:12.0px;height:12.0px;border-radius:50%;background:#8fabd2"></div>
<div class="a" style="left:607px;top:819.7px;font-size:12.6px;color:#343741;font-weight:normal;line-height:14px;transform:scaleX(0.97);transform-origin:0 0">11,200 - 12,800</div>
<div class="a" style="right:1098.5px;top:532.0px;font-size:11.5px;color:#69707d;font-weight:normal;line-height:14px;text-align:right">0</div>
<div class="a" style="right:1098.5px;top:470.9px;font-size:11.5px;color:#69707d;font-weight:normal;line-height:14px;text-align:right">200</div>
<div class="a" style="right:1098.5px;top:409.8px;font-size:11.5px;color:#69707d;font-weight:normal;line-height:14px;text-align:right">400</div>
<div class="a" style="right:1098.5px;top:348.7px;font-size:11.5px;color:#69707d;font-weight:normal;line-height:14px;text-align:right">600</div>
<div class="a" style="right:1098.5px;top:287.6px;font-size:11.5px;color:#69707d;font-weight:normal;line-height:14px;text-align:right">800</div>
<div class="a" style="left:371.5px;width:300px;top:546px;font-size:11.9px;color:#69707d;font-weight:normal;line-height:14px;text-align:center;">2026-03-08 00:00</div>
<div class="a" style="left:516.5px;width:300px;top:546px;font-size:11.9px;color:#69707d;font-weight:normal;line-height:14px;text-align:center;">2026-03-10 00:00</div>
<div class="a" style="left:662.3px;width:300px;top:546px;font-size:11.9px;color:#69707d;font-weight:normal;line-height:14px;text-align:center;">2026-03-12 00:00</div>
<div class="a" style="left:514px;width:300px;top:564px;font-size:12.2px;color:#535966;font-weight:bold;line-height:14px;text-align:center;">timestamp per 3 hours</div>
<div class="a" style="left:332px;top:396px;width:60px;height:14px;transform:rotate(-90deg);font-size:12.2px;font-weight:bold;color:#535966;line-height:14px;text-align:center">Count</div>
<div class="a" style="right:341.5px;top:521.5px;font-size:11.2px;color:#69707d;font-weight:normal;line-height:14px;text-align:right">0</div>
<div class="a" style="right:341.5px;top:445.7px;font-size:11.2px;color:#69707d;font-weight:normal;line-height:14px;text-align:right">10,000</div>
<div class="a" style="right:341.5px;top:369.9px;font-size:11.2px;color:#69707d;font-weight:normal;line-height:14px;text-align:right">20,000</div>
<div class="a" style="right:341.5px;top:294.1px;font-size:11.2px;color:#69707d;font-weight:normal;line-height:14px;text-align:right">30,000</div>
<div class="a" style="left:1172.4px;top:544px;width:40px;height:14px;"><div style="transform:rotate(-90deg) translateX(-7px);transform-origin:20px 7px;font-size:11.5px;color:#69707d;line-height:14px;width:40px;text-align:right;position:absolute;left:0;top:0">002</div></div>
<div class="a" style="left:1235.4px;top:544px;width:40px;height:14px;"><div style="transform:rotate(-90deg) translateX(-7px);transform-origin:20px 7px;font-size:11.5px;color:#69707d;line-height:14px;width:40px;text-align:right;position:absolute;left:0;top:0">004</div></div>
<div class="a" style="left:1299.4px;top:544px;width:40px;height:14px;"><div style="transform:rotate(-90deg) translateX(-7px);transform-origin:20px 7px;font-size:11.5px;color:#69707d;line-height:14px;width:40px;text-align:right;position:absolute;left:0;top:0">000</div></div>
<div class="a" style="left:1362px;top:544px;width:40px;height:14px;"><div style="transform:rotate(-90deg) translateX(-7px);transform-origin:20px 7px;font-size:11.5px;color:#69707d;line-height:14px;width:40px;text-align:right;position:absolute;left:0;top:0">003</div></div>
<div class="a" style="left:1425.2px;top:544px;width:40px;height:14px;"><div style="transform:rotate(-90deg) translateX(-7px);transform-origin:20px 7px;font-size:11.5px;color:#69707d;line-height:14px;width:40px;text-align:right;position:absolute;left:0;top:0">001</div></div>
<div class="a" style="left:1169px;width:300px;top:563px;font-size:12.2px;color:#535966;font-weight:bold;line-height:14px;text-align:center;">Agent</div>
<div class="a" style="left:1076px;top:390.5px;width:60px;height:14px;transform:rotate(-90deg);font-size:12.2px;font-weight:bold;color:#535966;line-height:14px;text-align:center">Count</div>
<div class="a" style="left:0;width:50.5px;top:659.9px;font-size:12.4px;color:#69707d;line-height:14px;text-align:right;transform:scaleX(0.86);transform-origin:100% 0">AU.14</div>
<div class="a" style="left:53px;top:666.9px;width:5.5px;height:1px;background:#d3d6dc"></div>
<div class="a" style="left:0;width:50.5px;top:680.6px;font-size:12.4px;color:#69707d;line-height:14px;text-align:right;transform:scaleX(0.86);transform-origin:100% 0">AC.7</div>
<div class="a" style="left:53px;top:687.6px;width:5.5px;height:1px;background:#d3d6dc"></div>
<div class="a" style="left:0;width:50.5px;top:701.4px;font-size:12.4px;color:#69707d;line-height:14px;text-align:right;transform:scaleX(0.86);transform-origin:100% 0">AC.9</div>
<div class="a" style="left:53px;top:708.4px;width:5.5px;height:1px;background:#d3d6dc"></div>
<div class="a" style="left:0;width:50.5px;top:722.1px;font-size:12.4px;color:#69707d;line-height:14px;text-align:right;transform:scaleX(0.86);transform-origin:100% 0">CM.1</div>
<div class="a" style="left:53px;top:729.1px;width:5.5px;height:1px;background:#d3d6dc"></div>
<div class="a" style="left:0;width:50.5px;top:742.9px;font-size:12.4px;color:#69707d;line-height:14px;text-align:right;transform:scaleX(0.86);transform-origin:100% 0">SI.7</div>
<div class="a" style="left:53px;top:749.9px;width:5.5px;height:1px;background:#d3d6dc"></div>
<div class="a" style="left:0;width:50.5px;top:763.6px;font-size:12.4px;color:#69707d;line-height:14px;text-align:right;transform:scaleX(0.86);transform-origin:100% 0">AU.6</div>
<div class="a" style="left:53px;top:770.6px;width:5.5px;height:1px;background:#d3d6dc"></div>
<div class="a" style="left:0;width:50.5px;top:784.4px;font-size:12.4px;color:#69707d;line-height:14px;text-align:right;transform:scaleX(0.86);transform-origin:100% 0">SC.8</div>
<div class="a" style="left:53px;top:791.4px;width:5.5px;height:1px;background:#d3d6dc"></div>
<div class="a" style="left:0;width:50.5px;top:805.1px;font-size:12.4px;color:#69707d;line-height:14px;text-align:right;transform:scaleX(0.86);transform-origin:100% 0">AU.5</div>
<div class="a" style="left:53px;top:812.1px;width:5.5px;height:1px;background:#d3d6dc"></div>
<div class="a" style="left:0;width:50.5px;top:825.9px;font-size:12.4px;color:#69707d;line-height:14px;text-align:right;transform:scaleX(0.86);transform-origin:100% 0">SI.4</div>
<div class="a" style="left:53px;top:832.9px;width:5.5px;height:1px;background:#d3d6dc"></div>
<div class="a" style="left:764.8px;width:300px;top:690.5px;font-size:28px;color:#209280;font-weight:bold;line-height:32px;text-align:center;transform:scaleX(0.955)">16,701</div>
<div class="a" style="left:765.5px;width:300px;top:721.5px;font-size:17px;color:#343741;font-weight:normal;line-height:22px;text-align:center;">Total alerts</div>
<div class="a" style="left:764.8px;width:300px;top:829px;font-size:28px;color:#209280;font-weight:bold;line-height:32px;text-align:center;transform:scaleX(0.955)">10</div>
<!-- scrollbar -->
<div class="a" style="left:1492px;top:0;width:4px;height:841px;background:#f7f8fc"></div>
<div class="a" style="left:1494px;top:11px;width:4px;height:736px;background:#a9abb3;border-radius:2px"></div>
<svg class="a" style="left:1490px;top:0" width="6" height="841"><path d="M4 3L6.5 6.2H1.5Z" fill="#a9abb3"/><path d="M4 838L6.5 834.8H1.5Z" fill="#a9abb3"/></svg>
</body></html>
